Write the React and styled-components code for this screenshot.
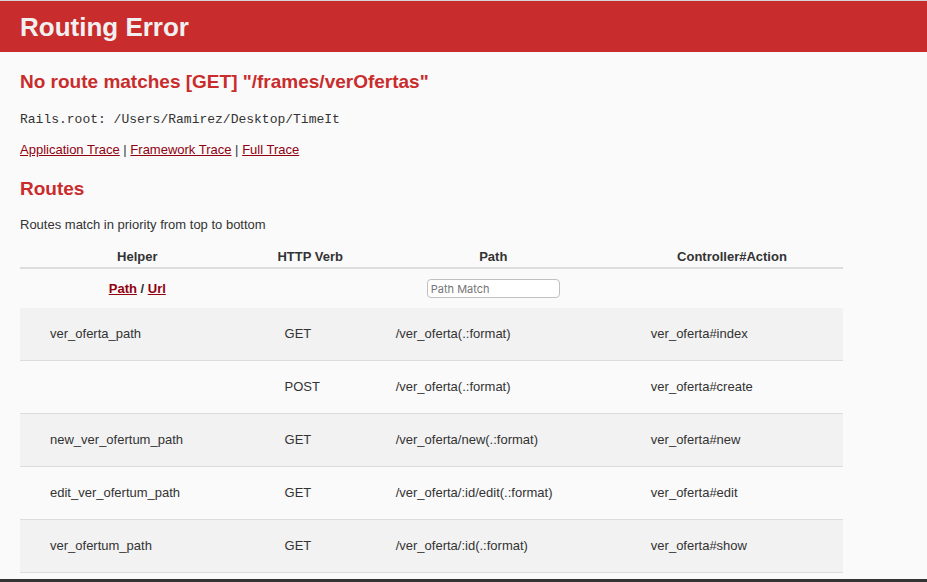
import React, { useState } from "react";
import styled, { createGlobalStyle } from "styled-components";

const GlobalStyle = createGlobalStyle`
  body {
    margin: 0;
    background: #fafafa;
    color: #333;
    font-family: "Liberation Sans", Helvetica, Arial, sans-serif;
    font-size: 13px;
    line-height: 18px;
  }
`;

const Page = styled.div`
  height: 100vh;
  box-sizing: border-box;
  overflow: hidden;
  border-top: 1px solid #d8d4d4;
  border-bottom: 3px solid #333;
`;

const Header = styled.header`
  background: #c92c2c;
  color: #f0f0f0;
  padding: 9px 20px 7px;
`;

const Title = styled.h1`
  margin: 0;
  font-size: 26px;
  line-height: 35px;
`;

const Container = styled.main`
  padding: 0 20px;
`;

const Heading = styled.h2`
  margin: 0;
  padding-top: 17px;
  color: #c92c2c;
  font-size: 19px;
  line-height: 25px;
`;

const Root = styled.pre`
  margin: 17px 0 12px;
  font: 13px/18px "Liberation Mono", "Courier New", monospace;
`;

const Traces = styled.nav`
  margin: 0;
`;

const TraceLink = styled.a`
  color: #900010;
`;

const Hint = styled.p`
  margin: 15px 0 14px;
`;

const Table = styled.table`
  width: 92.8%;
  table-layout: fixed;
  border-collapse: collapse;
`;

const Column = styled.col`
  width: ${({ $share }) => $share}%;
`;

const HeadCell = styled.th`
  height: 18px;
  padding: 0 0 1px;
  border-bottom: 2px solid #ddd;
`;

const FilterCell = styled.th`
  height: 39px;
  padding: 0;
`;

const PathInput = styled.input`
  box-sizing: border-box;
  width: 133px;
  height: 19px;
  padding: 0 3px;
  border: 1px solid #c0c0c0;
  border-radius: 4px;
  background: #fff;
  font: 11px Inter, "Liberation Sans", Helvetica, sans-serif;
`;

const RouteRow = styled.tr`
  border-bottom: 1px solid #ddd;
  &:nth-child(odd) {
    background: #f2f2f2;
  }
`;

const Cell = styled.td`
  height: 52px;
  padding: 0 0 0 30px;
  white-space: nowrap;
`;

const routes = [
  ["ver_oferta", "GET", "/ver_oferta(.:format)", "ver_oferta#index"],
  ["", "POST", "/ver_oferta(.:format)", "ver_oferta#create"],
  ["new_ver_ofertum", "GET", "/ver_oferta/new(.:format)", "ver_oferta#new"],
  ["edit_ver_ofertum", "GET", "/ver_oferta/:id/edit(.:format)", "ver_oferta#edit"],
  ["ver_ofertum", "GET", "/ver_oferta/:id(.:format)", "ver_oferta#show"],
];

export default function App() {
  const [suffix, setSuffix] = useState("path");
  const choose = (value) => (event) => {
    event.preventDefault();
    setSuffix(value);
  };
  return (
    <>
      <GlobalStyle />
      <Page>
        <Header>
          <Title>Routing Error</Title>
        </Header>
        <Container>
          <Heading>No route matches [GET] "/frames/verOfertas"</Heading>
          <Root>Rails.root: /Users/Ramirez/Desktop/TimeIt</Root>
          <Traces>
            <TraceLink href="#application">Application Trace</TraceLink> |{" "}
            <TraceLink href="#framework">Framework Trace</TraceLink> |{" "}
            <TraceLink href="#full">Full Trace</TraceLink>
          </Traces>
          <Heading>Routes</Heading>
          <Hint>Routes match in priority from top to bottom</Hint>
          <Table>
            <colgroup>
              <Column $share={28.5} />
              <Column $share={13.5} />
              <Column $share={31} />
              <Column $share={27} />
            </colgroup>
            <thead>
              <tr>
                <HeadCell>Helper</HeadCell>
                <HeadCell>HTTP Verb</HeadCell>
                <HeadCell>Path</HeadCell>
                <HeadCell>Controller#Action</HeadCell>
              </tr>
              <tr>
                <FilterCell>
                  <TraceLink href="#path" onClick={choose("path")}>Path</TraceLink> /{" "}
                  <TraceLink href="#url" onClick={choose("url")}>Url</TraceLink>
                </FilterCell>
                <FilterCell />
                <FilterCell>
                  <PathInput type="search" placeholder="Path Match" aria-label="Path Match" />
                </FilterCell>
                <FilterCell />
              </tr>
            </thead>
            <tbody>
              {routes.map(([name, verb, path, action]) => (
                <RouteRow key={action}>
                  <Cell>{name && `${name}_${suffix}`}</Cell>
                  <Cell>{verb}</Cell>
                  <Cell>{path}</Cell>
                  <Cell>{action}</Cell>
                </RouteRow>
              ))}
            </tbody>
          </Table>
        </Container>
      </Page>
    </>
  );
}
